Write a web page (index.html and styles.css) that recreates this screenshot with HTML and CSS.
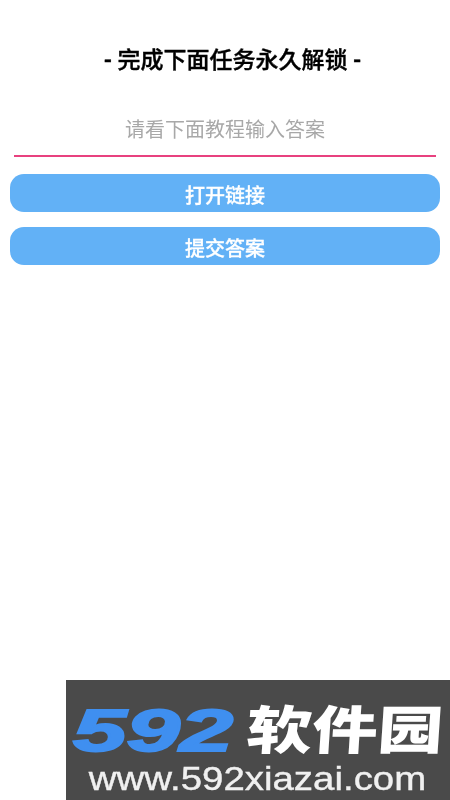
FILE: index.html
```html
<!DOCTYPE html>
<html lang="zh-CN">
<head>
    <meta charset="UTF-8">
    <title>解锁</title>
    <link rel="stylesheet" href="styles.css">
</head>
<body>
<div class="page">
    <h1 class="title">- 完成下面任务永久解锁 -</h1>
    <div class="answer">请看下面教程输入答案</div>
    <div class="button">打开链接</div>
    <div class="button">提交答案</div>
</div>
<div class="mark">
    <div class="mark-logo">
        <span class="mark-num">592</span>
        <span class="mark-name">软件园</span>
    </div>
    <div class="mark-url">www.592xiazai.com</div>
</div>
</body>
</html>
```
FILE: styles.css
```css
* {margin: 0; padding: 0; box-sizing: border-box}
html, body {
    width: 100%;
    height: 100%;
    background: #ffffff;
    font-family: "Roboto", "Noto Sans CJK SC", sans-serif;
}
.page {
    padding: 44px 10px 0;
    filter: blur(0.4px);
}
.title {
    padding-left: 15px;
    font-size: 23px;
    line-height: 33px;
    font-weight: 500;
    -webkit-text-stroke: 0.4px #000000;
    color: #000000;
    text-align: center;
}
.answer {
    margin: 33px 4px 17px;
    height: 47px;
    line-height: 40px;
    font-size: 20px;
    text-align: center;
    color: #a8a8a8;
    border-bottom: 2px solid #e8417f;
}
.button {
    height: 38px;
    margin-bottom: 15px;
    line-height: 45px;
    font-size: 20px;
    font-weight: 500;
    -webkit-text-stroke: 0.3px #ffffff;
    text-align: center;
    color: #ffffff;
    background: #62b1f6;
    border-radius: 14px;
}
/* Watermark over the bottom corner */
.mark {
    position: absolute;
    left: 66px;
    top: 680px;
    width: 384px;
    height: 120px;
    background: #4a4a4a;
    overflow: hidden;
}
.mark-logo {
    display: flex;
    align-items: center;
    gap: 12px;
    height: 48px;
    margin: 24px 0 0 7px;
    filter: blur(0.6px);
}
.mark-num {
    width: 162px;
    font-family: "Liberation Sans", sans-serif;
    font-size: 60px;
    line-height: 48px;
    font-weight: 700;
    font-style: italic;
    color: #3f8ff0;
    -webkit-text-stroke: 2px #3f8ff0;
    transform: translateY(3px) scaleX(1.6);
    transform-origin: left center;
}
.mark-name {
    font-family: "Noto Sans CJK SC", sans-serif;
    font-size: 52px;
    line-height: 48px;
    font-weight: 900;
    color: #ffffff;
    white-space: nowrap;
    transform: translateY(-1px) scaleX(1.26) skewX(-3deg);
    transform-origin: left center;
}
.mark-url {
    margin-top: 8px;
    padding-left: 22px;
    font-family: "Liberation Sans", sans-serif;
    font-size: 34px;
    line-height: 36px;
    color: #f0f0f0;
    -webkit-text-stroke: 0.4px #f0f0f0;
    white-space: nowrap;
    transform: translateX(-2px) scaleX(1.13);
    transform-origin: left center;
    filter: blur(0.5px);
}
```
